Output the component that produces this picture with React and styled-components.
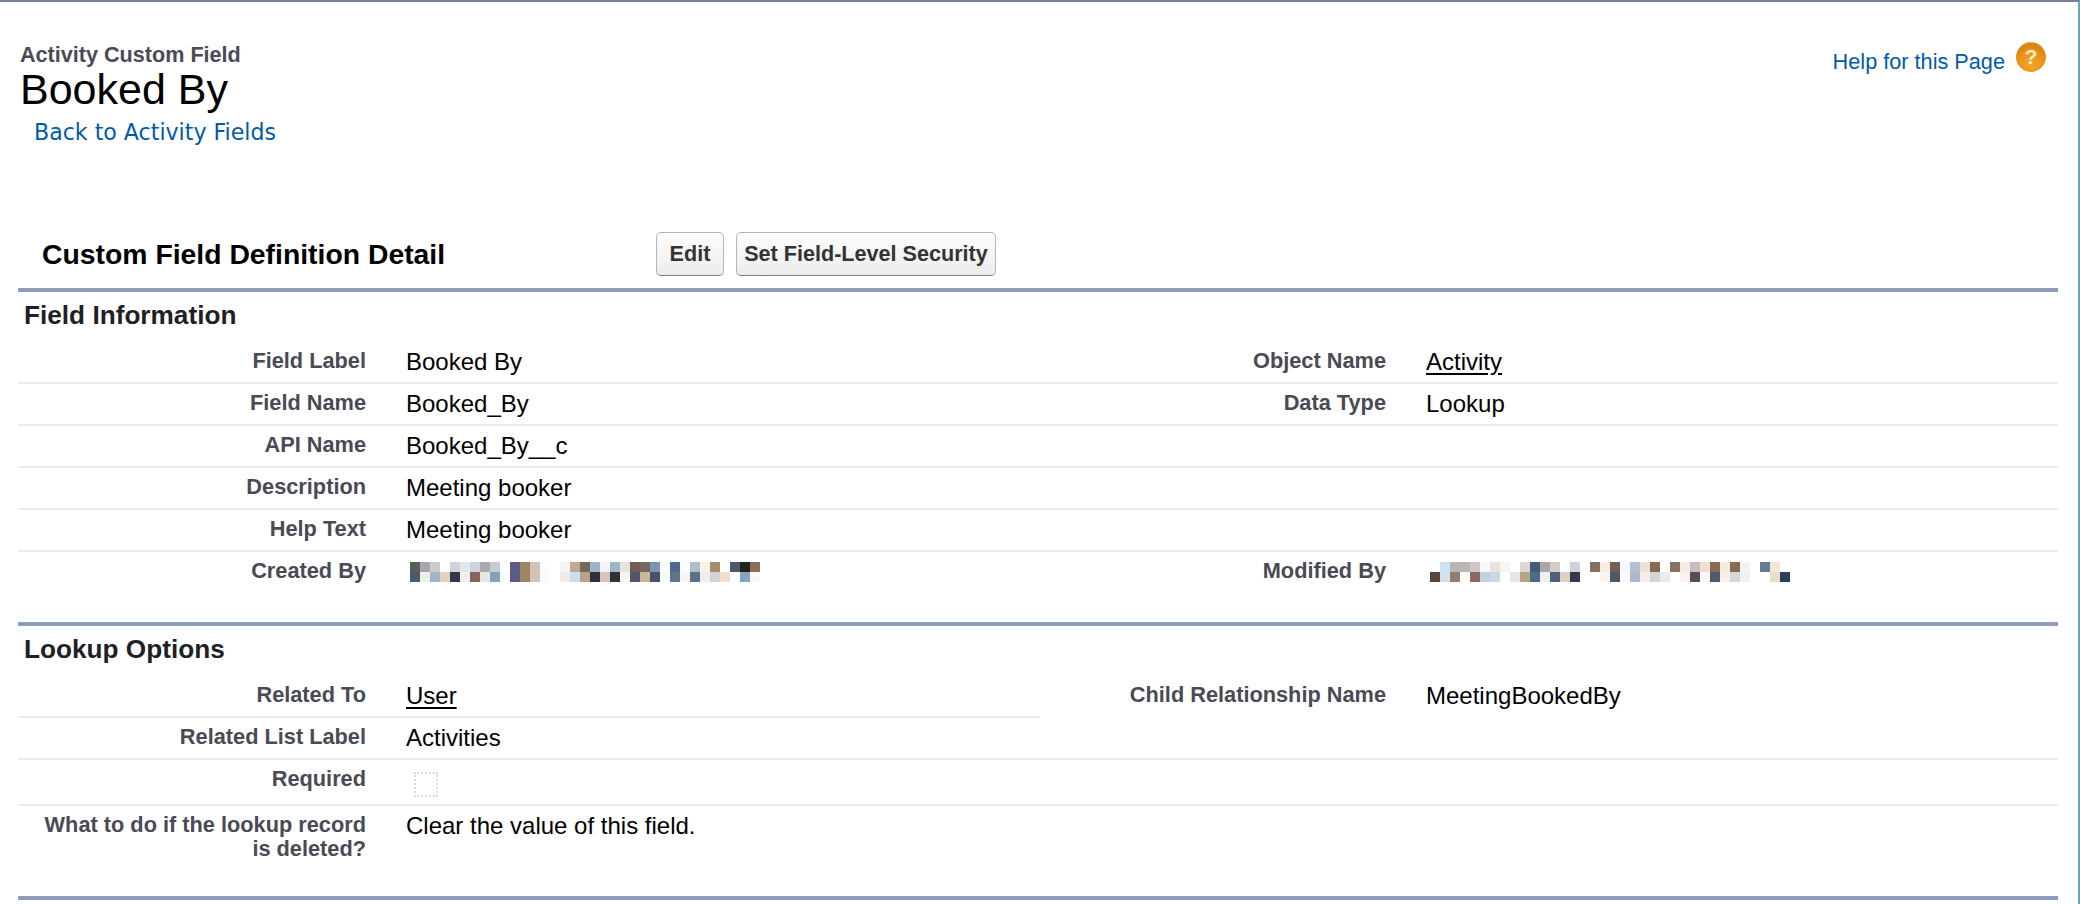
import React from "react";
import styled, { createGlobalStyle } from "styled-components";

const Global = createGlobalStyle`
  html, body { margin: 0; padding: 0; background: #fff; }
  body { font-family: "Liberation Sans", Arial, sans-serif; color: #000; }
`;

const Page = styled.div`
  width: 2080px;
  height: 904px;
  box-sizing: border-box;
  border-top: 2px solid #75809c;
  border-right: 2px solid #6aa5b8;
  padding: 0 20px 0 18px;
  overflow: hidden;
`;

const Header = styled.header`
  display: flex;
  justify-content: space-between;
  align-items: flex-start;
  height: 219px;
  padding-top: 41px;
  box-sizing: border-box;
`;

const TitleBlock = styled.div`
  display: flex;
  flex-direction: column;
  padding-left: 2px;
`;

const Eyebrow = styled.div`
  font-size: 21.6px;
  font-weight: 700;
  line-height: 24px;
  color: #4a4a56;
`;

const Title = styled.h1`
  margin: -2px 0 0;
  font-size: 43px;
  font-weight: 400;
  line-height: 48px;
  color: #000;
`;

const BackLink = styled.a`
  margin: 5px 0 0 14px;
  font-family: "DejaVu Sans", Verdana, sans-serif;
  font-size: 22.1px;
  line-height: 28px;
  color: #015ba7;
`;

const HelpLink = styled.a`
  display: flex;
  align-items: flex-start;
  gap: 11px;
  margin: -1px 12px 0 0;
  color: #015ba7;
`;

const HelpText = styled.span`
  margin-top: 5px;
  font-size: 21.7px;
  line-height: 30px;
`;

const HelpIcon = styled.span`
  width: 30px;
  height: 30px;
  border-radius: 50%;
  display: inline-flex;
  align-items: center;
  justify-content: center;
  background: radial-gradient(circle at 50% 75%, #f4a62a 0%, #e98f12 55%, #bd7008 100%);
  box-shadow: inset 0 1px 1px rgba(255, 255, 255, 0.35);
  color: #fdeccb;
  font-size: 21px;
  font-weight: 700;
`;

const TitleBar = styled.div`
  display: flex;
  align-items: center;
  height: 62px;
  box-sizing: border-box;
  padding: 0 0 6px 24px;
  margin-top: 5px;
`;

const MainTitle = styled.h2`
  margin: 0;
  width: 614px;
  font-size: 28.35px;
  font-weight: 700;
  color: #000;
  white-space: nowrap;
`;

const Buttons = styled.div`
  display: flex;
  gap: 12px;
`;

const Button = styled.button`
  width: ${(p) => p.$w}px;
  height: 44px;
  padding: 0;
  box-sizing: border-box;
  border: 1.5px solid #b5b5b5;
  border-bottom-color: #7f7f7f;
  border-radius: 5px;
  background: linear-gradient(#fdfdfd, #ececec);
  color: #333;
  font-family: "Liberation Sans", Arial, sans-serif;
  font-size: 21.6px;
  font-weight: 700;
  white-space: nowrap;
`;

const Section = styled.section`
  border-top: 4px solid #8e9dbe;
`;

const SectionTitle = styled.h3`
  margin: 0;
  height: 44px;
  padding: 6px 0 0 6px;
  box-sizing: border-box;
  font-size: 26.2px;
  line-height: 34px;
  font-weight: 700;
  color: #1f1f28;
`;

const Grid = styled.div`
  display: grid;
  grid-template-columns: 1022px 1fr;
  padding-top: 6px;
`;

const Cell = styled.div`
  display: flex;
  height: ${(p) => p.$h || 42}px;
  box-sizing: border-box;
  border-bottom: ${(p) => (p.$line ? "2px solid #ececec" : "0")};
`;

const Label = styled.div`
  width: ${(p) => p.$w}px;
  flex: none;
  padding-top: 7px;
  font-size: 21.75px;
  line-height: 24px;
  font-weight: 700;
  text-align: right;
  color: #4a4a56;
`;

const Value = styled.div`
  margin-left: 40px;
  padding-top: 7px;
  font-size: 24px;
  line-height: 26px;
  color: #000;
`;

const Underlined = styled.span`
  text-decoration: underline;
  text-underline-offset: 3px;
`;

const Box = styled.span`
  display: block;
  margin: 5px 0 0 8px;
  width: 24px;
  height: 25px;
  box-sizing: border-box;
  border: 2px dotted #dcdcdc;
`;

const MosaicSvg = styled.svg`
  display: block;
  margin: 3px 0 0 4px;
`;

const createdRows = [
  "#5a5d5c #a8a6ab #c9cbce #fff #cdd3dc #e2e7ec #cdd3de #aaa9ad #c8ccd0 #fff #5a5c88 #a08462 #d3c0b8 #fafcfe #fff #f3f3f3 #bfa990 #6f6958 #9fb5c5 #f1f5f8 #9fb5c4 #e9e4da #765a54 #736b60 #7c94ae #f8fafc #51698f #fbfcfc #adbdcb #f4f3e6 #a58c6c #fff #52556a #1e251e #8d6e57",
  "#4b5a6b #efeeea #9fb7c4 #e3d2c0 #363548 #eeeeec #87635c #e9e5df #82a3bb #f8fcfe #5a5c88 #a08462 #d3c0b8 #f9fbfd #fff #ecebe6 #ccdcec #b7a386 #30323a #d6c5b8 #2e3138 #f8f4f1 #4f5768 #c5b9a0 #4c5069 #f8fafc #5f748a #f3f7f9 #5b7189 #efeeea #d2d2d2 #eee0d0 #fff #85a5bd #f9f9f6",
];
const modifiedRows = [
  "#fcfdfe #cce2f0 #b5b7ba #bdb4b4 #cfc6c6 #f6f9f9 #eae2dd #f8f5f0 #fff #e0d6d0 #415b7a #a8a8aa #d6ccc6 #fafcfd #ccd3dc #fff #86705f #f5ecdf #775e56 #f3f8fa #b5bed3 #e9e2d6 #8a6852 #fff #867266 #f4ece2 #c6bcbd #efe0d0 #8a6a54 #f5ebdd #8c6a52 #f3f3f3 #fff #627d95 #f2e6d6 #fff",
  "#5a4638 #cfe2ee #8f7f6c #fff #8a6a66 #c0cfe4 #c8d8e6 #fff #e8e6e4 #b7a588 #4f6886 #f0eff1 #4f6178 #e0cfc2 #383748 #fff #fff #f9f5f0 #4f5866 #fcfbf9 #aeb8cd #f5eee4 #d4d4d6 #ebebe8 #fff #f7f4ec #5a4c54 #faf7f0 #52586e #f6f0e6 #d6d6d8 #f0f0ee #fff #fff #e8ddd0 #2e4054",
];

function Mosaic({ rows }) {
  const cols = rows[0].split(" ").length;
  return (
    <MosaicSvg width={cols * 10} height={20} viewBox={`0 0 ${cols * 10} 20`} shapeRendering="crispEdges">
      {rows.map((r, y) =>
        r.split(" ").map((c, x) => <rect key={`${x}-${y}`} x={x * 10} y={y * 10} width={10} height={10} fill={c} />)
      )}
    </MosaicSvg>
  );
}

function Field({ w, label, line = true, h, children }) {
  return (
    <Cell $line={line} $h={h}>
      <Label $w={w}>{label}</Label>
      {children != null && <Value>{children}</Value>}
    </Cell>
  );
}

export default function App() {
  return (
    <Page>
      <Global />
      <Header>
        <TitleBlock>
          <Eyebrow>Activity Custom Field</Eyebrow>
          <Title>Booked By</Title>
          <BackLink>Back to Activity Fields</BackLink>
        </TitleBlock>
        <HelpLink>
          <HelpText>Help for this Page</HelpText>
          <HelpIcon>?</HelpIcon>
        </HelpLink>
      </Header>
      <TitleBar>
        <MainTitle>Custom Field Definition Detail</MainTitle>
        <Buttons>
          <Button $w={68}>Edit</Button>
          <Button $w={260}>Set Field-Level Security</Button>
        </Buttons>
      </TitleBar>
      <Section>
        <SectionTitle>Field Information</SectionTitle>
        <Grid>
          <Field w={348} label="Field Label">Booked By</Field>
          <Field w={346} label="Object Name"><Underlined>Activity</Underlined></Field>
          <Field w={348} label="Field Name">Booked_By</Field>
          <Field w={346} label="Data Type">Lookup</Field>
          <Field w={348} label="API Name">Booked_By__c</Field>
          <Field w={346} label="" />
          <Field w={348} label="Description">Meeting booker</Field>
          <Field w={346} label="" />
          <Field w={348} label="Help Text">Meeting booker</Field>
          <Field w={346} label="" />
          <Field w={348} label="Created By" line={false} h={70}><Mosaic rows={createdRows} /></Field>
          <Field w={346} label="Modified By" line={false} h={70}><Mosaic rows={modifiedRows} /></Field>
        </Grid>
      </Section>
      <Section>
        <SectionTitle>Lookup Options</SectionTitle>
        <Grid>
          <Field w={348} label="Related To"><Underlined>User</Underlined></Field>
          <Field w={346} label="Child Relationship Name" line={false}>MeetingBookedBy</Field>
          <Field w={348} label="Related List Label">Activities</Field>
          <Field w={346} label="" />
          <Field w={348} label="Required" h={46}><Box /></Field>
          <Field w={346} label="" h={46} />
          <Field w={348} label={<>What to do if the lookup record<br />is deleted?</>} line={false} h={90}>Clear the value of this field.</Field>
          <Field w={346} label="" line={false} h={90} />
        </Grid>
      </Section>
      <Section />
    </Page>
  );
}
